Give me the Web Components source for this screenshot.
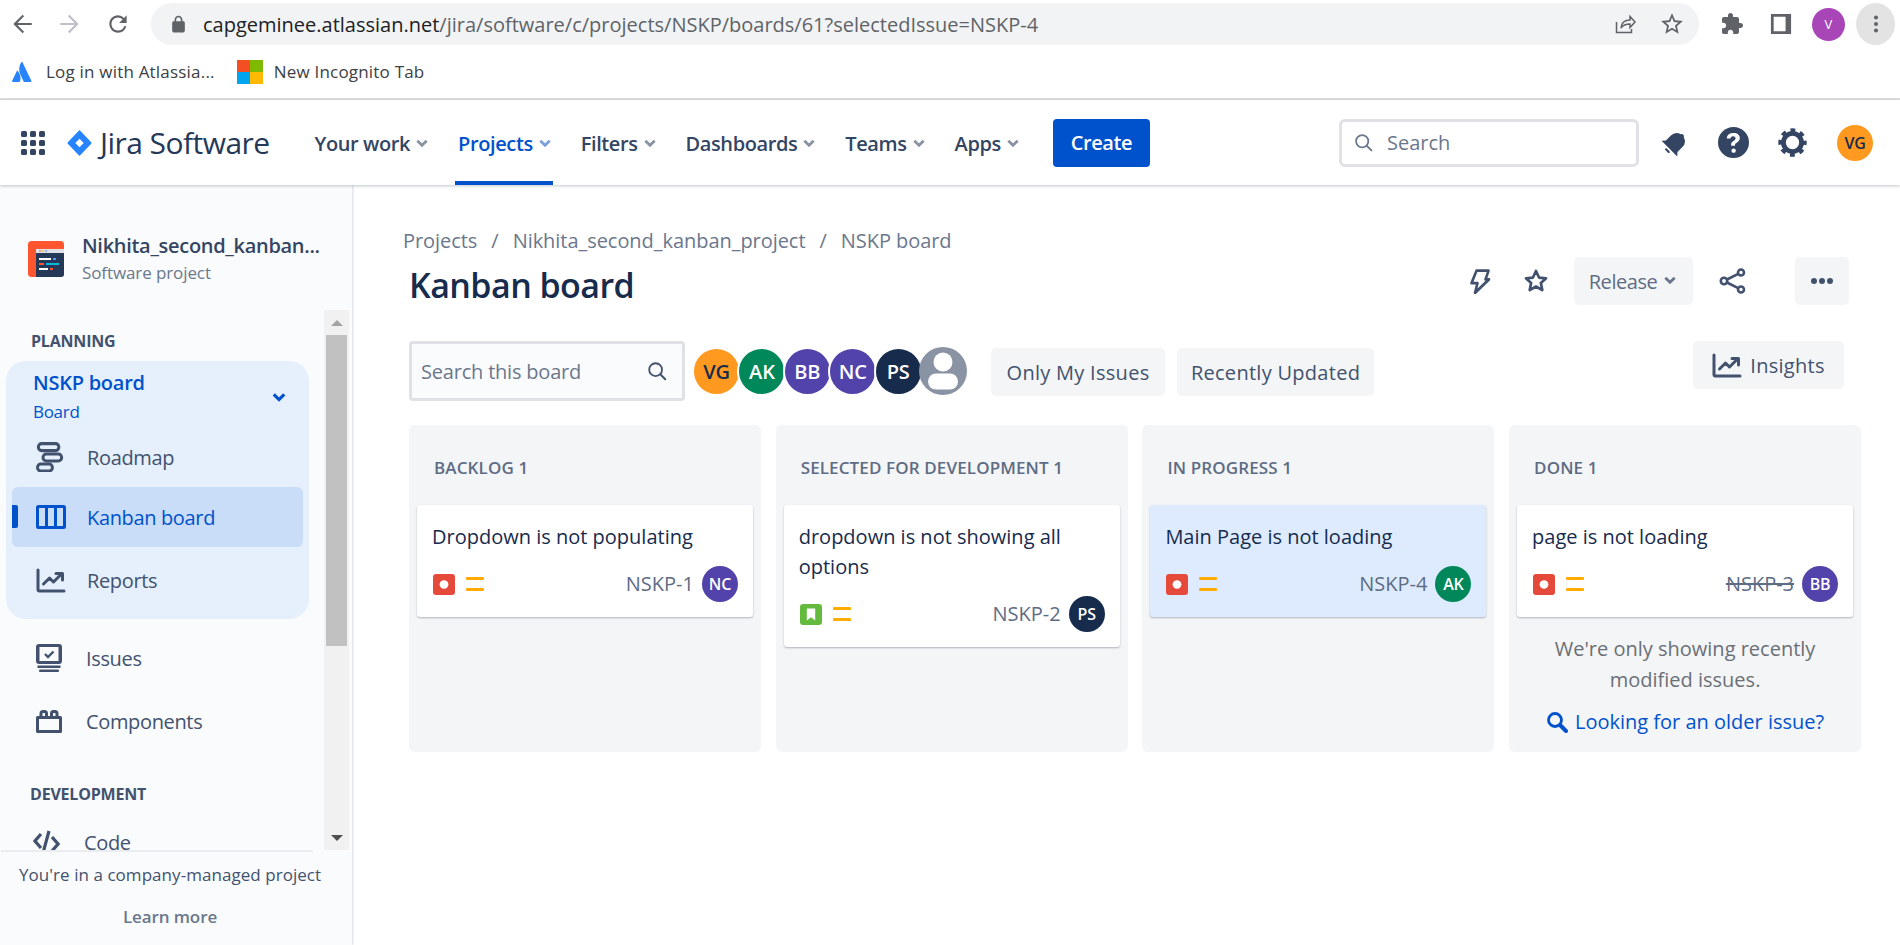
<!DOCTYPE html>
<html>
<head>
<meta charset="utf-8">
<title>Kanban board</title>
<style>
  html, body { margin: 0; height: 100%; overflow: hidden; background: #fff; }
  body { font-family: "Open Sans", "Noto Sans", sans-serif; color: #172b4d; display: flex; flex-direction: column; height: 945px; }
</style>
</head>
<body>
<browser-bar></browser-bar>
<bookmark-bar></bookmark-bar>
<jira-nav></jira-nav>
<div style="display:flex;flex:1;min-height:0">
  <project-sidebar></project-sidebar>
  <board-page></board-page>
</div>

<script>
const ICONS = {
  back: '<path fill="currentColor" d="M21 11H7.8l6.1-6.1L12.5 3.500 4 12l8.500 8.500 1.400-1.400L7.800 13H21z"/>',
  forward: '<path fill="currentColor" d="M3 11h13.200l-6.100-6.100 1.400-1.400L20 12l-8.500 8.500-1.400-1.400 6.100-6.100H3z"/>',
  reload: '<path fill="currentColor" d="M17.650 6.350A7.958 7.958 0 0 0 12 4c-4.420 0-7.990 3.580-7.990 8s3.570 8 7.990 8c3.730 0 6.840-2.550 7.730-6h-2.080A5.990 5.990 0 0 1 12 18c-3.310 0-6-2.690-6-6s2.690-6 6-6c1.660 0 3.140.690 4.220 1.780L13 11h7V4l-2.350 2.350z"/>',
  lock: '<path fill="currentColor" d="M18 8h-1V6c0-2.760-2.240-5-5-5S7 3.240 7 6v2H6c-1.100 0-2 .9-2 2v10c0 1.100.9 2 2 2h12c1.100 0 2-.9 2-2V10c0-1.100-.9-2-2-2zm-3.100 0H9.100V6c0-1.710 1.390-3.100 2.900-3.100s2.900 1.390 2.900 3.100v2z"/>',
  share: '<path fill="none" stroke="currentColor" stroke-width="1.500" d="M3.500 10v10.500h15V17M8 16c.5-5 4-8 9-8V4.500l5 5.500-5 5.500V12c-4 0-7 1-9 4z"/>',
  star: '<path fill="currentColor" d="M22 9.240l-7.190-.62L12 2 9.190 8.630 2 9.240l5.460 4.730L5.820 21 12 17.270 18.180 21l-1.630-7.030L22 9.240zM12 15.400l-3.760 2.270 1-4.280-3.320-2.880 4.380-.38L12 6.100l1.710 4.040 4.380.38-3.320 2.880 1 4.280L12 15.400z"/>',
  puzzle: '<path fill="currentColor" d="M20.500 11H19V7c0-1.100-.9-2-2-2h-4V3.500C13 2.120 11.880 1 10.500 1S8 2.120 8 3.500V5H4c-1.100 0-1.990.9-1.990 2v3.800H3.500c1.490 0 2.700 1.210 2.700 2.700s-1.210 2.700-2.700 2.700H2V20c0 1.100.9 2 2 2h3.800v-1.500c0-1.490 1.210-2.700 2.700-2.700s2.700 1.210 2.700 2.700V22H17c1.100 0 2-.9 2-2v-4h1.500c1.380 0 2.500-1.120 2.500-2.500S21.880 11 20.500 11z"/>',
  panel: '<path fill="currentColor" fill-rule="evenodd" d="M1 1h22v22H1zM4 4v16h13V4z"/>',
  kebab: '<circle cx="12" cy="5" r="2.200" fill="currentColor"/><circle cx="12" cy="12" r="2.200" fill="currentColor"/><circle cx="12" cy="19" r="2.200" fill="currentColor"/>',
  atlassian: '<path fill="#2684ff" d="M7 11.500c-.4-.5-1-.4-1.300.2L.2 22.600c-.3.600.1 1.400.8 1.400h7.600c.4 0 .7-.2.900-.5 1.600-3.400.6-8.500-2.500-12z"/><path fill="#2684ff" d="M11 1.600C8 6.400 8.200 11.700 10.200 15.700l3.700 7.800c.2.300.5.500.9.500H22.400c.7 0 1.100-.8.800-1.400L12.700 1.600c-.4-.7-1.300-.7-1.700 0z"/>',
  grid: '<g fill="currentColor"><rect x="0" y="0" width="6" height="6" rx="1.500"/><rect x="9" y="0" width="6" height="6" rx="1.500"/><rect x="18" y="0" width="6" height="6" rx="1.500"/><rect x="0" y="9" width="6" height="6" rx="1.500"/><rect x="9" y="9" width="6" height="6" rx="1.500"/><rect x="18" y="9" width="6" height="6" rx="1.500"/><rect x="0" y="18" width="6" height="6" rx="1.500"/><rect x="9" y="18" width="6" height="6" rx="1.500"/><rect x="18" y="18" width="6" height="6" rx="1.500"/></g>',
  jira: '<path fill="#2684ff" d="M12 0l11 11c.6.600.6 1.400 0 2L12 24 1 13c-.6-.6-.6-1.400 0-2z"/><path fill="#fff" d="M12 8l4 4-4 4-4-4z"/>',
  chevron: '<path fill="none" stroke="currentColor" stroke-width="4.200" stroke-linejoin="miter" d="M5 8.500l7 7 7-7"/>',
  search: '<circle cx="10.500" cy="10.500" r="7" fill="none" stroke="currentColor" stroke-width="2"/><path stroke="currentColor" stroke-width="2.200" stroke-linecap="round" d="M15.800 15.800L21 21"/>',
  bell: '<g transform="rotate(45 12 12)" fill="currentColor"><path d="M5 16V10a7 7 0 0 1 5.200-6.800 1.900 1.900 0 0 1 3.600 0A7 7 0 0 1 19 10v6l2.500 2.800H2.500z"/><rect x="9.500" y="20.300" width="5" height="1.800" rx=".9"/></g>',
  help: '<path fill="currentColor" fill-rule="evenodd" d="M12 0a12 12 0 1 1 0 24 12 12 0 0 1 0-24zm-.2 4.700c-3 0-4.900 1.600-5 4.200h2.900c.1-1 .9-1.700 2-1.700 1.100 0 1.900.7 1.900 1.600 0 .8-.4 1.300-1.400 1.900-1.500.9-2.100 1.800-2 3.300v.6h2.900v-.5c0-.9.300-1.300 1.500-2 1.500-.9 2.300-2 2.300-3.500 0-2.300-1.900-3.900-4.600-3.900zm.3 11.900a1.700 1.700 0 1 0 0 3.400 1.700 1.700 0 0 0 0-3.400z"/>',
  gear: '<g fill="none" stroke="currentColor"><circle cx="12" cy="12" r="7.500" stroke-width="4"/><circle cx="12" cy="12" r="10" stroke-width="3.500" stroke-dasharray="3.900 3.954" stroke-dashoffset="1.950"/></g>',
  project: '<rect width="36" height="36" rx="3.500" fill="#ff5630"/><path fill="#253858" d="M8 8h28v25a3 3 0 0 1-3 3H8z"/><rect x="8" y="8" width="28" height="4" fill="#dfe1e6"/><circle cx="12" cy="10" r=".8" fill="#ff5630"/><circle cx="15" cy="10" r=".8" fill="#ffab00"/><circle cx="18" cy="10" r=".8" fill="#2684ff"/><g><rect x="11" y="17" width="12" height="2" fill="#fff"/><rect x="25" y="17" width="3" height="2" fill="#4c9aff"/><rect x="11" y="22" width="5" height="2" fill="#ff5630"/><rect x="18" y="22" width="13" height="2" fill="#00b8d9"/><rect x="11" y="27" width="9" height="2" fill="#fff"/><rect x="22" y="27" width="3" height="2" fill="#ff5630"/></g>',
  roadmap: '<g fill="none" stroke="currentColor" stroke-width="3.200"><rect x="2.500" y="1.600" width="22" height="7" rx="3.500"/><rect x="7.500" y="12" width="20" height="7" rx="3.500"/><rect x="1.600" y="22" width="16" height="7" rx="3.500"/></g>',
  columns: '<path fill="currentColor" fill-rule="evenodd" d="M2.500 0h25A2.500 2.500 0 0 1 30 2.500v19a2.500 2.500 0 0 1-2.500 2.500h-25A2.500 2.500 0 0 1 0 21.500v-19A2.500 2.500 0 0 1 2.500 0zM3 3v18h6V3zm9 0v18h6V3zm9 0v18h6V3z"/>',
  reports: '<path fill="none" stroke="currentColor" stroke-width="3" stroke-linecap="round" stroke-linejoin="round" d="M2 2v19.500a1.500 1.500 0 0 0 1.500 1.500H28M7.500 16l6-6 4 4 8-8M20 5.500h6.500V12"/>',
  issues: '<g fill="currentColor"><path fill-rule="evenodd" d="M3 0h20a3 3 0 0 1 3 3v14a3 3 0 0 1-3 3H3a3 3 0 0 1-3-3V3a3 3 0 0 1 3-3zm.5 3v14h19V3z"/><rect x="1.500" y="21.500" width="23" height="2.500"/><rect x="3" y="25.500" width="20" height="2.500" rx="1"/></g><path fill="none" stroke="currentColor" stroke-width="2.400" d="M9 10l3 3 5.500-5.500"/>',
  components: '<path fill="none" stroke="currentColor" stroke-width="3" stroke-linejoin="round" d="M1.500 7.500h23v14h-23zM5 7V3.500a2 2 0 0 1 2-2h1.500a2 2 0 0 1 2 2V7M15.500 7V3.500a2 2 0 0 1 2-2H19a2 2 0 0 1 2 2V7"/>',
  code: '<path fill="none" stroke="currentColor" stroke-width="3.200" d="M8 5L2 12l6 7M16 2L10 24M19 8l6 7-6 7"/>',
  bolt: '<path fill="none" stroke="currentColor" stroke-width="2.600" stroke-linejoin="round" d="M8.500 2.500h12l-3 8h3.500L7 23l2.500-9H3.500z"/>',
  starline: '<path fill="none" stroke="currentColor" stroke-width="2.500" stroke-linejoin="round" d="M12 2.800l2.800 6 6.500.7-4.800 4.400 1.300 6.500-5.800-3.300-5.800 3.300 1.300-6.500L2.700 9.500l6.500-.7z"/>',
  sharenode: '<g fill="none" stroke="currentColor" stroke-width="2.600"><circle cx="5" cy="13" r="3.200"/><circle cx="22" cy="4.500" r="3"/><circle cx="22" cy="21.500" r="3"/><path d="M8 11.500l11.200-5.600M8 14.500l11.200 5.600"/></g>',
  dots: '<g fill="currentColor"><circle cx="4" cy="12" r="3"/><circle cx="12" cy="12" r="3"/><circle cx="20" cy="12" r="3"/></g>',
  person: '<circle cx="24" cy="24" r="24" fill="#8993a4"/><circle cx="24" cy="15" r="9.500" fill="#fff"/><rect x="9" y="26.500" width="30" height="16" rx="8" fill="#fff"/>',
  bug: '<rect width="21" height="21" rx="3" fill="#e5493a"/><circle cx="10.500" cy="10.500" r="4.200" fill="#fff"/>',
  story: '<rect width="21" height="21" rx="3" fill="#63ba3c"/><path fill="#fff" d="M6.500 4.500h8v12l-4-3.200-4 3.200z"/>',
  medium: '<rect x="0" y="2" width="18" height="3" rx="1" fill="#ffab00"/><rect x="0" y="13" width="18" height="3" rx="1" fill="#ffab00"/>',
  finder: '<circle cx="9" cy="9" r="6.500" fill="none" stroke="currentColor" stroke-width="2.800"/><path stroke="currentColor" stroke-width="4" stroke-linecap="round" d="M14.500 14.500L20 20"/>'
};
const VIEWBOX = { grid: '0 0 24 24', project: '0 0 36 36', roadmap: '0 0 30 30', columns: '0 0 30 24', reports: '0 0 30 25', issues: '0 0 26 28', components: '0 0 26 23', code: '0 0 27 26', sharenode: '0 0 27 26', person: '0 0 48 48', bug: '0 0 21 21', story: '0 0 21 21', medium: '0 0 18 18', finder: '0 0 22 22' };

// every svg in the page goes through this one element
class UiIcon extends HTMLElement {
  connectedCallback() {
    const name = this.getAttribute('name');
    const w = this.getAttribute('w') || 24;
    const h = this.getAttribute('h') || w;
    const vb = VIEWBOX[name] || '0 0 24 24';
    this.attachShadow({ mode: 'open' }).innerHTML = `
      <style>:host { display: inline-flex; flex: none; } svg { display: block; }</style>
      <svg width="${w}" height="${h}" viewBox="${vb}" preserveAspectRatio="none">${ICONS[name]}</svg>`;
  }
}
customElements.define('ui-icon', UiIcon);

class UserAvatar extends HTMLElement {
  constructor() {
    super();
    this.attachShadow({ mode: 'open' }).innerHTML = `
      <style>
        :host { display: inline-flex; align-items: center; justify-content: center; flex: none; box-sizing: border-box;
          width: 36px; height: 36px; border-radius: 50%; background: var(--av, #5243aa); color: var(--fg, #fff);
          font-size: 16px; font-weight: 600; letter-spacing: -.2px; }
      </style><slot></slot>`;
  }
}
customElements.define('user-avatar', UserAvatar);

const browserTpl = document.createElement('template');
browserTpl.innerHTML = `
  <style>
    :host { display: flex; align-items: center; height: 45px; flex: none; padding-top: 3px; box-sizing: border-box; color: #5f6368; }
    .nav { display: flex; align-items: center; width: 151px; padding-left: 9px; box-sizing: border-box; gap: 22px; }
    .omni { width: 1548px; height: 42px; border-radius: 21px; background: #f1f3f4; display: flex; align-items: center; padding: 0 14px 0 18px; box-sizing: border-box; }
    .url { margin-left: 15px; font-size: 20px; color: #5f6368; white-space: nowrap; flex: 1; }
    .url b { font-weight: 400; color: #202124; }
    .omni ui-icon + ui-icon { margin-left: 22px; }
    .right { display: flex; align-items: center; margin-left: 21px; }
    .me { width: 33px; height: 33px; border-radius: 50%; background: #a846b8; color: #fff; font-size: 13px; display: flex; align-items: center; justify-content: center; margin-left: 20px; }
    .kebab { width: 39px; height: 42px; border-radius: 50%; background: #e3e3e3; display: flex; align-items: center; justify-content: center; margin-left: 11px; }
  </style>
  <div class="nav">
    <ui-icon name="back" w="26"></ui-icon>
    <ui-icon name="forward" w="26" style="color:#bdc1c6"></ui-icon>
    <ui-icon name="reload" w="26"></ui-icon>
  </div>
  <div class="omni">
    <ui-icon name="lock" w="19"></ui-icon>
    <span class="url"><b>capgeminee.atlassian.net</b>/jira/software/c/projects/NSKP/boards/61?selectedIssue=NSKP-4</span>
    <ui-icon name="share" w="24"></ui-icon>
    <ui-icon name="star" w="26"></ui-icon>
  </div>
  <div class="right">
    <ui-icon name="puzzle" w="24"></ui-icon>
    <ui-icon name="panel" w="22" style="margin-left:26px"></ui-icon>
    <span class="me">V</span>
    <span class="kebab"><ui-icon name="kebab" w="22"></ui-icon></span>
  </div>`;
class BrowserBar extends HTMLElement {
  constructor() {
    super();
    this.attachShadow({ mode: 'open' }).appendChild(browserTpl.content.cloneNode(true));
  }
}
customElements.define('browser-bar', BrowserBar);

const bookmarkTpl = document.createElement('template');
bookmarkTpl.innerHTML = `
  <style>
    :host { display: flex; align-items: center; flex: none; height: 55px; box-sizing: border-box; padding: 0 0 0 12px; border-bottom: 2px solid #dedede; font-size: 17px; letter-spacing: .2px; color: #3c4043; }
    span { margin-left: 13px; }
    .ms { display: grid; grid-template-columns: 13px 13px; grid-template-rows: 12px 12px; margin-left: 22px; }
    .ms i { display: block; }
    .t { margin-left: 11px; }
  </style>
  <ui-icon name="atlassian" w="20" h="21"></ui-icon>
  <span style="margin-left:14px">Log in with Atlassia...</span>
  <div class="ms"><i style="background:#f25022"></i><i style="background:#7fba00"></i><i style="background:#00a4ef"></i><i style="background:#ffb900"></i></div>
  <span class="t">New Incognito Tab</span>`;
class BookmarkBar extends HTMLElement {
  constructor() {
    super();
    this.attachShadow({ mode: 'open' }).appendChild(bookmarkTpl.content.cloneNode(true));
  }
}
customElements.define('bookmark-bar', BookmarkBar);

class NavItem extends HTMLElement {
  constructor() {
    super();
    this.attachShadow({ mode: 'open' }).innerHTML = `
      <style>
        :host { display: flex; align-items: center; height: 85px; box-sizing: border-box; padding: 2px 0 0 3px; gap: 4px; font-size: 20px; font-weight: 600; letter-spacing: -.4px; color: #344563; white-space: nowrap; }
        :host([active]) { color: #0052cc; box-shadow: inset 0 -4px 0 #0052cc; }
        ui-icon { color: #8993a4; margin-top: -1px; }
        :host([active]) ui-icon { color: #7a9fdc; }
      </style>
      <slot></slot><ui-icon name="chevron" w="16"></ui-icon>`;
  }
}
customElements.define('nav-item', NavItem);

const navTpl = document.createElement('template');
navTpl.innerHTML = `
  <style>
    :host { display: flex; align-items: center; flex: none; height: 85px; padding-left: 21px; box-sizing: border-box; background: #fff; box-shadow: 0 1px 3px rgba(9,30,66,.25); position: relative; z-index: 2; color: #344563; }
    .brand { font-size: 30px; letter-spacing: -.55px; color: #253858; margin-left: 8px; white-space: nowrap; }
    .items { display: flex; margin-left: 42px; gap: 25px; }
    .create { margin-left: 32px; width: 97px; height: 48px; border-radius: 4px; background: #0052cc; color: #fff; font-size: 20px; font-weight: 600; letter-spacing: -.4px; display: flex; align-items: center; justify-content: center; }
    .search { margin-left: auto; width: 300px; height: 48px; box-sizing: border-box; border: 3px solid #dfe1e6; border-radius: 6px; display: flex; align-items: center; padding-left: 11px; gap: 13px; color: #6b778c; font-size: 20px; }
    .tools { display: flex; align-items: center; margin: 0 27px 0 22px; }
  </style>
  <ui-icon name="grid" w="24" style="color:#344563"></ui-icon>
  <ui-icon name="jira" w="25" h="26" style="margin-left:22px"></ui-icon>
  <span class="brand">Jira Software</span>
  <div class="items">
    <nav-item>Your work</nav-item>
    <nav-item active>Projects</nav-item>
    <nav-item>Filters</nav-item>
    <nav-item>Dashboards</nav-item>
    <nav-item>Teams</nav-item>
    <nav-item>Apps</nav-item>
  </div>
  <div class="create">Create</div>
  <div class="search"><ui-icon name="search" w="21"></ui-icon><span>Search</span></div>
  <div class="tools">
    <ui-icon name="bell" w="28"></ui-icon>
    <ui-icon name="help" w="31" style="margin-left:29px"></ui-icon>
    <ui-icon name="gear" w="29" style="margin-left:29px"></ui-icon>
    <user-avatar style="--av:#ff991f;--fg:#172b4d;margin-left:30px">VG</user-avatar>
  </div>`;
class JiraNav extends HTMLElement {
  constructor() {
    super();
    this.attachShadow({ mode: 'open' }).appendChild(navTpl.content.cloneNode(true));
  }
}
customElements.define('jira-nav', JiraNav);

class SideLink extends HTMLElement {
  connectedCallback() {
    const icon = this.getAttribute('icon');
    const w = this.getAttribute('w') || 28;
    const h = this.getAttribute('h') || w;
    this.attachShadow({ mode: 'open' }).innerHTML = `
      <style>
        :host { display: flex; align-items: center; height: 60px; box-sizing: border-box; font-size: 20px; letter-spacing: -.35px; color: #42526e; position: relative; }
        .ic { width: var(--tx, 81px); padding-left: var(--ix, 30px); display: flex; box-sizing: border-box; flex: none; }
        :host([active]) { background: #c9dcf8; color: #0052cc; border-radius: 6px; margin: 0 6px; --tx: 75px; --ix: 24px; }
        :host([active])::before { content: ""; position: absolute; left: 0; top: 18px; width: 6px; height: 23px; background: #0052cc; border-radius: 0 2px 2px 0; }
      </style>
      <span class="ic"><ui-icon name="${icon}" w="${w}" h="${h}"></ui-icon></span><slot></slot>`;
  }
}
customElements.define('side-link', SideLink);

const sidebarTpl = document.createElement('template');
sidebarTpl.innerHTML = `
  <style>
    :host { display: flex; flex-direction: column; width: 352px; flex: none; background: #fafbfc; box-shadow: 1px 0 2px rgba(9,30,66,.16); position: relative; color: #42526e; min-height: 0; }
    .proj { display: flex; align-items: center; height: 125px; flex: none; padding: 23px 0 0 28px; box-sizing: border-box; }
    .proj .names { margin-left: 18px; white-space: nowrap; }
    .proj .name { font-size: 20px; font-weight: 600; letter-spacing: -.3px; line-height: 27px; color: #344563; }
    .proj .sub { font-size: 17px; letter-spacing: -.1px; line-height: 28px; color: #6b778c; }
    .mid { display: flex; flex: 1; min-height: 0; }
    .scroll { width: 324px; flex: none; overflow: hidden; }
    .head { font-size: 16px; font-weight: 700; letter-spacing: -.2px; color: #42526e; }
    .planning { height: 51px; padding: 22px 0 0 31px; box-sizing: border-box; line-height: 18px; }
    .panel { margin: 0 15px 0 6px; height: 258px; background: #e6effc; border-radius: 20px; display: flex; flex-direction: column; }
    .board { height: 66px; flex: none; display: flex; align-items: center; justify-content: space-between; box-sizing: border-box; padding: 6px 21px 0 27px; color: #0052cc; }
    .board .t { font-size: 20px; font-weight: 600; letter-spacing: -.25px; line-height: 29px; }
    .board .s { font-size: 17px; letter-spacing: -.3px; line-height: 29px; }
    .gap { height: 3px; flex: none; }
    .outer { --tx: 86px; --ix: 36px; }
    .dev { padding: 34px 0 0 30px; line-height: 18px; height: 61px; box-sizing: border-box; }
    .bar { width: 25px; flex: none; background: #f1f1f1; display: flex; flex-direction: column; align-items: center; }
    .bar .up, .bar .down { height: 25px; flex: none; display: flex; align-items: center; justify-content: center; }
    .bar .thumb { width: 21px; height: 311px; background: #c1c1c1; flex: none; }
    .bar .fill { flex: 1; }
    .up i { border: 6px solid transparent; border-top: 0; border-bottom: 6px solid #a3a3a3; }
    .down i { border: 6px solid transparent; border-bottom: 0; border-top: 6px solid #505050; }
    .foot { height: 95px; flex: none; border-top: 2px solid #ebecf0; box-sizing: border-box; width: 312px; margin-left: 1px; padding-left: 26px; text-align: center; font-size: 17px; letter-spacing: .05px; color: #42526e; white-space: nowrap; }
    .foot .a { margin: 10px 0 0 -8px; line-height: 26px; }
    .foot .b { margin-top: 16px; line-height: 26px; font-weight: 600; letter-spacing: -.1px; color: #6b778c; }
  </style>
  <div class="proj">
    <ui-icon name="project" w="36"></ui-icon>
    <div class="names">
      <div class="name">Nikhita_second_kanban...</div>
      <div class="sub">Software project</div>
    </div>
  </div>
  <div class="mid">
    <div class="scroll">
      <div class="head planning">PLANNING</div>
      <div class="panel">
        <div class="board">
          <div><div class="t">NSKP board</div><div class="s">Board</div></div>
          <ui-icon name="chevron" w="18"></ui-icon>
        </div>
        <side-link icon="roadmap" w="28" h="30">Roadmap</side-link>
        <side-link active icon="columns" w="30" h="24">Kanban board</side-link>
        <div class="gap"></div>
        <side-link icon="reports" w="30" h="25">Reports</side-link>
      </div>
      <div style="height:9px"></div>
      <side-link class="outer" icon="issues" w="26" h="28">Issues</side-link>
      <div style="height:3px"></div>
      <side-link class="outer" icon="components" w="26" h="23">Components</side-link>
      <div class="head dev">DEVELOPMENT</div>
      <side-link class="outer" icon="code" w="27" h="26" style="--tx:84px;--ix:33px">Code</side-link>
    </div>
    <div class="bar">
      <div class="up"><i></i></div>
      <div class="thumb"></div>
      <div class="fill"></div>
      <div class="down"><i></i></div>
    </div>
  </div>
  <div class="foot">
    <div class="a">You're in a company-managed project</div>
    <div class="b">Learn more</div>
  </div>`;
class ProjectSidebar extends HTMLElement {
  constructor() {
    super();
    this.attachShadow({ mode: 'open' }).appendChild(sidebarTpl.content.cloneNode(true));
  }
}
customElements.define('project-sidebar', ProjectSidebar);

class ToolButton extends HTMLElement {
  constructor() {
    super();
    this.attachShadow({ mode: 'open' }).innerHTML = `
      <style>
        :host { display: inline-flex; align-items: center; justify-content: center; height: 48px; box-sizing: border-box; flex: none; border-radius: 5px; background: #f4f5f7; color: #42526e; font-size: 20px; font-weight: 500; letter-spacing: .28px; white-space: nowrap; }
      </style><slot></slot>`;
  }
}
customElements.define('tool-button', ToolButton);

class IssueCard extends HTMLElement {
  connectedCallback() {
    const type = this.getAttribute('type') || 'bug';
    this.attachShadow({ mode: 'open' }).innerHTML = `
      <style>
        :host { display: block; background: #fff; border-radius: 3px; box-shadow: 0 1px 2px rgba(9,30,66,.3); padding: 17px 15px 15px; font-size: 20px; line-height: 30px; color: #172b4d; }
        :host([selected]) { background: #deebff; }
        .row { display: flex; align-items: center; margin-top: 14px; height: 36px; }
        .key { margin-left: auto; margin-right: 8px; color: #5e6c84; }
        :host([done]) .key { text-decoration: line-through; }
        .pr { margin-left: 11px; }
      </style>
      <slot></slot>
      <div class="row">
        <ui-icon name="${type}" w="22" h="21" style="margin-left:1px"></ui-icon>
        <ui-icon class="pr" name="medium" w="18"></ui-icon>
        <span class="key">${this.getAttribute('key')}</span>
        <slot name="who"></slot>
      </div>`;
  }
}
customElements.define('issue-card', IssueCard);

class BoardColumn extends HTMLElement {
  connectedCallback() {
    this.attachShadow({ mode: 'open' }).innerHTML = `
      <style>
        :host { display: block; width: 352px; height: 327px; flex: none; box-sizing: border-box; background: #f4f5f7; border-radius: 6px; padding: 0 8px; }
        .h { height: 80px; box-sizing: border-box; padding: 5px 0 0 17px; display: flex; align-items: center; font-size: 17px; font-weight: 600; letter-spacing: .12px; color: #5e6c84; }
      </style>
      <div class="h">${this.getAttribute('title')}</div>
      <slot></slot>`;
  }
}
customElements.define('board-column', BoardColumn);

const boardTpl = document.createElement('template');
boardTpl.innerHTML = `
  <style>
    :host { display: block; flex: 1; min-width: 0; padding: 43px 39px 0 57px; box-sizing: border-box; background: #fff; }
    .crumbs { height: 24px; display: flex; align-items: center; margin-left: -6px; font-size: 20px; letter-spacing: -.05px; color: #6b778c; white-space: nowrap; }
    .crumbs i { font-style: normal; margin: 0 14px; }
    .top { display: flex; align-items: center; height: 48px; margin-top: 5px; margin-right: 12px; }
    h1 { margin: 8px auto 0 0; font-size: 34px; font-weight: 600; letter-spacing: -.55px; color: #172b4d; }
    .ib { width: 56px; display: flex; justify-content: center; color: #42526e; }
    .rel { width: 119px; margin-left: 10px; color: #5e6c84; font-weight: 400; gap: 5px; letter-spacing: -.45px; }
    .rel ui-icon { color: #6b778c; margin-top: -3px; }
    .tools { display: flex; align-items: flex-start; margin-top: 36px; margin-right: 17px; }
    .box { width: 276px; height: 60px; box-sizing: border-box; border: 3px solid #dfe1e6; border-radius: 4px; background: #fafbfc; display: flex; align-items: center; justify-content: space-between; padding: 0 14px 0 9px; font-size: 20px; letter-spacing: -.2px; color: #6b778c; white-space: nowrap; }
    .box ui-icon { color: #42526e; }
    .people { display: flex; margin: 6px 0 0 7px; }
    .people user-avatar { width: 49px; height: 49px; font-size: 20px; border: 2px solid #fff; margin-right: -3.6px; }
    .rest { display: flex; gap: 12px; margin: 7px 0 0 24px; }
    .insights { margin-left: auto; width: 151px; gap: 8px; }
    .cols { display: flex; gap: 14.7px; margin-top: 24px; }
    .note { text-align: center; margin-top: 16px; font-size: 20px; line-height: 31px; color: #6b6f76; }
    .older { display: flex; align-items: center; justify-content: center; gap: 7px; margin-top: 12px; font-size: 20px; line-height: 30px; color: #0052cc; white-space: nowrap; }
  </style>
  <div class="crumbs">Projects<i>/</i>Nikhita_second_kanban_project<i>/</i>NSKP board</div>
  <div class="top">
    <h1>Kanban board</h1>
    <span class="ib"><ui-icon name="bolt" w="24" h="26"></ui-icon></span>
    <span class="ib"><ui-icon name="starline" w="26"></ui-icon></span>
    <tool-button class="rel">Release <ui-icon name="chevron" w="16"></ui-icon></tool-button>
    <span class="ib" style="width:78px"><ui-icon name="sharenode" w="27" h="26"></ui-icon></span>
    <tool-button style="width:54px;margin-left:24px"><ui-icon name="dots" w="24"></ui-icon></tool-button>
  </div>
  <div class="tools">
    <div class="box"><span>Search this board</span><ui-icon name="search" w="22"></ui-icon></div>
    <div class="people">
      <user-avatar style="--av:#ff991f;--fg:#172b4d">VG</user-avatar>
      <user-avatar style="--av:#00875a">AK</user-avatar>
      <user-avatar style="--av:#5243aa">BB</user-avatar>
      <user-avatar style="--av:#5243aa">NC</user-avatar>
      <user-avatar style="--av:#172b4d">PS</user-avatar>
      <ui-icon name="person" w="48"></ui-icon>
    </div>
    <div class="rest">
      <tool-button style="width:174px">Only My Issues</tool-button>
      <tool-button style="width:197px">Recently Updated</tool-button>
    </div>
    <tool-button class="insights"><ui-icon name="reports" w="30" h="25"></ui-icon>Insights</tool-button>
  </div>
  <div class="cols">
    <board-column title="BACKLOG 1">
      <issue-card key="NSKP-1">Dropdown is not populating<user-avatar slot="who" style="--av:#5243aa">NC</user-avatar></issue-card>
    </board-column>
    <board-column title="SELECTED FOR DEVELOPMENT 1">
      <issue-card key="NSKP-2" type="story">dropdown is not showing all options<user-avatar slot="who" style="--av:#172b4d">PS</user-avatar></issue-card>
    </board-column>
    <board-column title="IN PROGRESS 1">
      <issue-card key="NSKP-4" selected>Main Page is not loading<user-avatar slot="who" style="--av:#00875a">AK</user-avatar></issue-card>
    </board-column>
    <board-column title="DONE 1">
      <issue-card key="NSKP-3" done>page is not loading<user-avatar slot="who" style="--av:#5243aa">BB</user-avatar></issue-card>
      <div class="note">We're only showing recently<br>modified issues.</div>
      <div class="older"><ui-icon name="finder" w="22"></ui-icon><span>Looking for an older issue?</span></div>
    </board-column>
  </div>`;
class BoardPage extends HTMLElement {
  constructor() {
    super();
    this.attachShadow({ mode: 'open' }).appendChild(boardTpl.content.cloneNode(true));
  }
}
customElements.define('board-page', BoardPage);
</script>
</body>
</html>
